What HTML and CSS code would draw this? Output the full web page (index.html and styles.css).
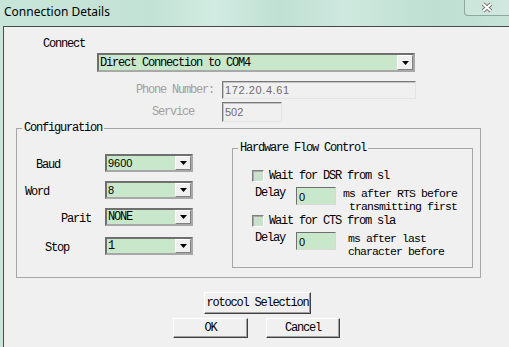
FILE: index.html
```html
<!DOCTYPE html>
<html lang="en">
<head>
    <meta charset="UTF-8">
    <title>Connection Details</title>
    <link rel="stylesheet" href="styles.css">
</head>
<body>

<div class="window">
    <div class="titlebar">
        <span class="title">Connection Details</span>
        <div class="close-btn">
            <svg width="12" height="11" viewBox="0 0 12 11">
                <path d="M2 2 L10 9 M10 2 L2 9" stroke="#777" stroke-width="4"/>
                <path d="M2 2 L10 9 M10 2 L2 9" stroke="#fff" stroke-width="2"/>
            </svg>
        </div>
    </div>

    <div class="client">
        <div class="connect-label">Connect</div>
        <div class="combo combo-connect">
            <span class="combo-text">Direct Connection to COM4</span>
            <span class="drop"><svg width="7" height="4" viewBox="0 0 7 4"><path d="M0 0h7L3.5 4z" fill="#000"/></svg></span>
        </div>

        <div class="field-row row-phone">
            <span class="dim-label">Phone Number:</span>
            <div class="textbox textbox-phone">172.20.4.61</div>
        </div>
        <div class="field-row row-service">
            <span class="dim-label dim-service">Service</span>
            <div class="textbox textbox-service">502</div>
        </div>

        <fieldset class="group config">
            <legend>Configuration</legend>
            <div class="cfg-list">
                <div class="cfg-row">
                    <span class="cfg-label lbl-baud">Baud</span>
                    <div class="combo combo-small">
                        <span class="combo-text num">9600</span>
                        <span class="drop"><svg width="7" height="4" viewBox="0 0 7 4"><path d="M0 0h7L3.5 4z" fill="#000"/></svg></span>
                    </div>
                </div>
                <div class="cfg-row">
                    <span class="cfg-label lbl-word">Word</span>
                    <div class="combo combo-small">
                        <span class="combo-text num">8</span>
                        <span class="drop"><svg width="7" height="4" viewBox="0 0 7 4"><path d="M0 0h7L3.5 4z" fill="#000"/></svg></span>
                    </div>
                </div>
                <div class="cfg-row">
                    <span class="cfg-label lbl-parit">Parit</span>
                    <div class="combo combo-small">
                        <span class="combo-text">NONE</span>
                        <span class="drop"><svg width="7" height="4" viewBox="0 0 7 4"><path d="M0 0h7L3.5 4z" fill="#000"/></svg></span>
                    </div>
                </div>
                <div class="cfg-row cfg-row-last">
                    <span class="cfg-label lbl-stop">Stop</span>
                    <div class="combo combo-small">
                        <span class="combo-text">1</span>
                        <span class="drop"><svg width="7" height="4" viewBox="0 0 7 4"><path d="M0 0h7L3.5 4z" fill="#000"/></svg></span>
                    </div>
                </div>
            </div>

            <fieldset class="group hardware">
                <legend>Hardware Flow Control</legend>
                <div class="hw-check hw-check-first">
                    <span class="checkbox"></span>
                    <span>Wait for DSR from sl</span>
                </div>
                <div class="hw-delay hw-delay-first">
                    <span class="delay-label">Delay</span>
                    <div class="delay-input">0</div>
                    <div class="delay-text">ms after RTS before<br>&nbsp;transmitting first</div>
                </div>
                <div class="hw-check hw-check-second">
                    <span class="checkbox"></span>
                    <span>Wait for CTS from sla</span>
                </div>
                <div class="hw-delay hw-delay-second">
                    <span class="delay-label">Delay</span>
                    <div class="delay-input">0</div>
                    <div class="delay-text delay-text-wide">ms after last<br>character before</div>
                </div>
            </fieldset>
        </fieldset>

        <div class="buttons">
            <button class="btn btn-protocol">rotocol Selection</button>
            <div class="btn-row">
                <button class="btn btn-ok">OK</button>
                <button class="btn btn-cancel">Cancel</button>
            </div>
        </div>
    </div>
</div>

</body>
</html>
```

FILE: styles.css
```css
body {
    margin: 0;
    width: 509px;
    height: 347px;
    overflow: hidden;
    background: #cde6dc;
    font-family: "Liberation Mono", monospace;
    font-size: 12px;
    letter-spacing: -1.2px;
    line-height: 12px;
    color: #000;
}

.window {
    display: flex;
    flex-direction: column;
    height: 347px;
}

/* title bar */
.titlebar {
    height: 26px;
    display: flex;
    justify-content: space-between;
    align-items: flex-start;
    background: linear-gradient(90deg, #c8e5da 0%, #c3e2d6 30%, #d2ebe2 42%, #c0e0d4 55%, #cfe8df 68%, #bedfd2 85%, #c6e3d8 100%);
}

.title {
    font-family: "Noto Sans", sans-serif;
    font-size: 12px;
    letter-spacing: 0;
    line-height: 14px;
    margin: 5px 0 0 4px;
}

.close-btn {
    width: 44px;
    height: 15px;
    border-left: 1px solid #8ea89f;
    border-bottom: 1px solid #8ea89f;
    border-bottom-left-radius: 4px;
    background: rgba(255, 255, 255, 0.18);
    display: flex;
    align-items: center;
    justify-content: center;
}

/* dialog body */
.client {
    flex: 1;
    margin-left: 3px;
    border-left: 1px solid #4a4a4a;
    border-top: 1px solid #4a4a4a;
    background: #f0f0f0;
    padding-top: 11px;
    display: flex;
    flex-direction: column;
}

.connect-label {
    margin-left: 39px;
}

.combo {
    display: flex;
    align-items: center;
    justify-content: space-between;
    box-sizing: border-box;
    background: #c9e7cb;
    border: 2px solid;
    border-color: #6f6f6f #a8a8a8 #a8a8a8 #6f6f6f;
}

.combo-connect {
    width: 318px;
    height: 19px;
    margin: 3px 0 0 93px;
}

.combo-text {
    padding-left: 1px;
}

.num {
    font-family: "Liberation Sans", sans-serif;
    font-size: 11px;
    letter-spacing: 0;
}

.drop {
    width: 14px;
    height: 13px;
    margin-right: 0;
    background: #f0f0f0;
    border: 1px solid;
    border-color: #fff #808080 #808080 #fff;
    display: flex;
    align-items: center;
    justify-content: center;
}

.field-row {
    display: flex;
    align-items: center;
}

.row-phone {
    margin-top: 9px;
}

.row-service {
    margin-top: 3px;
}

.dim-label {
    width: 218px;
    box-sizing: border-box;
    text-align: right;
    padding-right: 8px;
    color: #a0a0a0;
}

.dim-service {
    padding-right: 28px;
}

.textbox {
    box-sizing: border-box;
    border: 1px solid;
    border-color: #7a7a7a #e4e4e4 #e4e4e4 #7a7a7a;
    box-shadow: inset 1px 1px 0 #c4c4c4;
    color: #6d6d6d;
    font-family: "Liberation Sans", sans-serif;
    font-size: 11px;
    letter-spacing: 0.6px;
    padding-left: 2px;
    display: flex;
    align-items: center;
}

.textbox-phone {
    width: 194px;
    height: 18px;
}

.textbox-service {
    width: 60px;
    height: 20px;
    letter-spacing: 0;
}

/* group boxes */
.group {
    border: 1px solid #a6a6a6;
    margin: 0;
    padding: 0;
    min-width: 0;
}

.group legend {
    padding: 0 2px;
    margin-left: 5px;
    line-height: 12px;
}

.config {
    width: 465px;
    box-sizing: border-box;
    margin-left: 12px;
    display: flex;
    padding: 0 7px 9px 0;
}

.cfg-list {
    display: flex;
    flex-direction: column;
    gap: 9px;
    padding-top: 20px;
}

.cfg-row {
    display: flex;
    align-items: flex-start;
}

.cfg-row-last {
    margin-top: 2px;
}

.cfg-label {
    width: 88px;
    box-sizing: border-box;
    margin-top: 5px;
}

.lbl-baud { padding-left: 19px; }
.lbl-word { padding-left: 8px; }
.lbl-parit { padding-left: 44px; }
.lbl-stop { padding-left: 28px; }

.combo-small {
    width: 88px;
    height: 18px;
}

.combo-small .drop {
    height: 12px;
}

.hardware {
    width: 241px;
    box-sizing: border-box;
    margin: 8px 0 0 auto;
    padding: 0 0 9px 0;
    display: flex;
    flex-direction: column;
}

.hw-check {
    display: flex;
    align-items: center;
    gap: 5px;
    padding-left: 19px;
    height: 12px;
}

.hw-check-first { margin-top: 16px; }
.hw-check-second { margin-top: 2px; }

.checkbox {
    width: 12px;
    height: 12px;
    box-sizing: border-box;
    background: #c9e2cb;
    border: 1px solid;
    border-color: #808080 #fff #fff #808080;
    box-shadow: inset 1px 1px 0 #a8a8a8;
}

.hw-delay {
    display: flex;
    align-items: flex-start;
}

.hw-delay-first { margin-top: 5px; }
.hw-delay-second { margin-top: 5px; }

.delay-label {
    width: 63px;
    box-sizing: border-box;
    padding-left: 22px;
}

.delay-input {
    width: 40px;
    height: 18px;
    box-sizing: border-box;
    background: #c9e7cb;
    border: 1px solid;
    border-color: #6f6f6f #d8d8d8 #d8d8d8 #6f6f6f;
    font-family: "Liberation Sans", sans-serif;
    font-size: 11px;
    letter-spacing: 0;
    padding: 3px 0 0 2px;
}

.delay-text {
    margin-left: 7px;
    font-size: 11.5px;
    line-height: 13px;
    letter-spacing: -0.9px;
}

.delay-text-wide {
    margin-left: 12px;
}

/* buttons */
.buttons {
    display: flex;
    flex-direction: column;
    align-items: center;
    margin-top: 14px;
}

.btn {
    font-family: "Liberation Mono", monospace;
    font-size: 12px;
    letter-spacing: -1.2px;
    line-height: 12px;
    color: #000;
    background: #f0f0f0;
    border: 1px solid;
    border-color: #fff #404040 #404040 #fff;
    box-shadow: inset -1px -1px 0 #a0a0a0;
    padding: 0;
    margin: 0;
}

.btn-protocol {
    width: 107px;
    height: 22px;
    margin-left: 2px;
}

.btn-row {
    display: flex;
    gap: 18px;
    margin-top: 4px;
}

.btn-ok {
    width: 75px;
    height: 20px;
}

.btn-cancel {
    width: 74px;
    height: 20px;
}
```
